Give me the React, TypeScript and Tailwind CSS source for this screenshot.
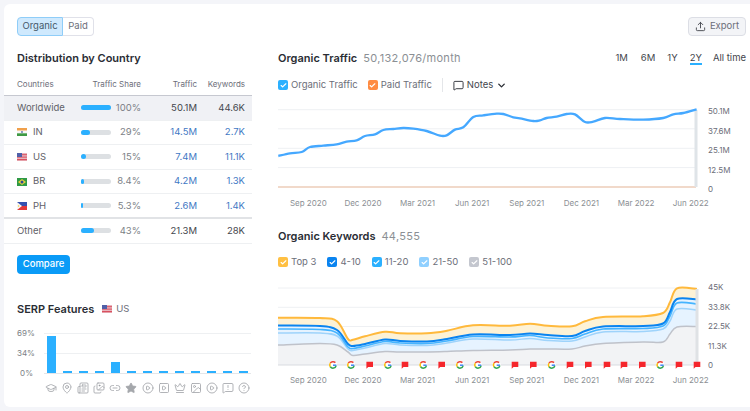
import { Check, ChevronDown, CircleHelp, CirclePlay, Crown, GraduationCap, Images, Image, Link2, MapPin, MessageSquare, MessageSquareWarning, Newspaper, SquarePlay, Star, Upload } from "lucide-react";

type Pt = [number, number];

const trafficLine: Pt[] = [
  [25, 174], [60, 166], [95, 162], [120, 147], [160, 143], [200, 139], [230, 131], [260, 127], [285, 114], [315, 109],
  [340, 96], [370, 93], [400, 90], [430, 92], [470, 99], [510, 113], [530, 112], [555, 95], [580, 88], [610, 57],
  [640, 52], [680, 47], [700, 48], [730, 58], [750, 61], [790, 69], [810, 67], [830, 60], [860, 56], [890, 48],
  [915, 49], [945, 72], [970, 71], [1005, 60], [1050, 63], [1120, 65], [1180, 60], [1210, 49], [1240, 45], [1280, 34],
];

// x, top 3, 4-10, 11-20, 21-50, 51-100
const keywordRows = [
  [278, 318.7, 326.5, 330, 334, 346],
  [320, 319, 327, 330.5, 334, 344.5],
  [337, 322.3, 331, 334, 337, 346],
  [348, 340, 345, 348, 350, 353],
  [353, 340.7, 347, 349.5, 351.5, 356.5],
  [365, 337.3, 345, 347, 349, 355],
  [385, 332.7, 340.5, 342.5, 344.5, 352.5],
  [400, 334.3, 342, 344, 346, 353],
  [427, 334.3, 342.5, 344.5, 346.5, 353],
  [447, 331.7, 340, 342, 344, 352.5],
  [473, 326.3, 335.5, 337.5, 340, 351.5],
  [510, 326.7, 336, 338, 341, 351],
  [530, 324.7, 334.5, 336.5, 339.5, 350],
  [548, 326.7, 336, 339, 341.5, 350],
  [572, 327.3, 337, 339.5, 342, 350],
  [585, 322.3, 332, 335, 338, 347],
  [603, 318, 327.5, 330, 333, 344.5],
  [643, 317.3, 327, 329.5, 332.5, 343],
  [663, 314, 324.5, 327, 330, 343],
  [670, 303.3, 313, 317, 322, 335],
  [677, 289.3, 300, 304, 310, 328],
  [697, 290, 300.5, 305, 311, 327.5],
];

function smooth(pts: Pt[]) {
  let d = `M${pts[0][0]} ${pts[0][1]}`;
  for (let i = 0; i < pts.length - 1; i++) {
    const p0 = pts[i - 1] || pts[i];
    const p1 = pts[i];
    const p2 = pts[i + 1];
    const p3 = pts[i + 2] || p2;
    const c1x = p1[0] + (p2[0] - p0[0]) / 6;
    const c1y = p1[1] + (p2[1] - p0[1]) / 6;
    const c2x = p2[0] - (p3[0] - p1[0]) / 6;
    const c2y = p2[1] - (p3[1] - p1[1]) / 6;
    d += `C${c1x} ${c1y} ${c2x} ${c2y} ${p2[0]} ${p2[1]}`;
  }
  return d;
}

const series = (i: number): Pt[] => keywordRows.map((r) => [r[0], r[i]]);
const area = (i: number) => `${smooth(series(i))}L697 366L278 366Z`;

function FlagIN() {
  return (
    <svg width="10" height="8" viewBox="0 0 10 8">
      <rect width="10" height="2.7" fill="#f0a04b" />
      <rect y="2.7" width="10" height="2.6" fill="#f7f7f7" />
      <rect y="5.3" width="10" height="2.7" fill="#3f9a45" />
      <circle cx="5" cy="4" r="0.9" fill="#5a6fa8" />
    </svg>
  );
}

function FlagUS() {
  return (
    <svg width="10" height="8" viewBox="0 0 10 8">
      <rect width="10" height="8" fill="#e8b4bc" />
      <rect y="1.2" width="10" height="1" fill="#d9505f" />
      <rect y="3.6" width="10" height="1" fill="#d9505f" />
      <rect y="6" width="10" height="1.2" fill="#d9505f" />
      <rect width="5" height="4" fill="#5060a8" />
    </svg>
  );
}

function FlagBR() {
  return (
    <svg width="10" height="8" viewBox="0 0 10 8">
      <rect width="10" height="8" fill="#2f9a45" />
      <path d="M5 1L9 4L5 7L1 4Z" fill="#e8d23a" />
      <circle cx="5" cy="4" r="1.5" fill="#2b4a94" />
    </svg>
  );
}

function FlagPH() {
  return (
    <svg width="10" height="8" viewBox="0 0 10 8">
      <rect width="10" height="4" fill="#3350b0" />
      <rect y="4" width="10" height="4" fill="#e23a3a" />
      <path d="M0 0L5 4L0 8Z" fill="#f7f7f7" />
      <circle cx="1.6" cy="4" r="0.8" fill="#eec93c" />
    </svg>
  );
}

const rows = [
  { name: "Worldwide", pct: "100%", w: 100, traffic: "50.1M", kw: "44.6K", dark: true, bg: "bg-[#f0f1f5]", border: "border-b border-[#eef0f2]" },
  { name: "IN", flag: <FlagIN />, pct: "29%", w: 29, traffic: "14.5M", kw: "2.7K", border: "border-b border-[#eef0f2]" },
  { name: "US", flag: <FlagUS />, pct: "15%", w: 15, traffic: "7.4M", kw: "11.1K", border: "border-b border-[#eef0f2]" },
  { name: "BR", flag: <FlagBR />, pct: "8.4%", w: 11, traffic: "4.2M", kw: "1.3K", border: "border-b border-[#eef0f2]" },
  { name: "PH", flag: <FlagPH />, pct: "5.3%", w: 6, traffic: "2.6M", kw: "1.4K", border: "border-b-2 border-[#e1e3e6]" },
  { name: "Other", pct: "43%", w: 43, traffic: "21.3M", kw: "28K", dark: true, border: "border-b border-[#eef0f2]" },
];

const serpIcons = [GraduationCap, MapPin, Newspaper, Images, Link2, Star, CirclePlay, SquarePlay, Crown, Image, CirclePlay, MessageSquareWarning, CircleHelp];
const serpBars = [37, 2, 2, 2, 11, 2, 2, 2, 2, 2, 2, 2, 2];

const months = ["Sep 2020", "Dec 2020", "Mar 2021", "Jun 2021", "Sep 2021", "Dec 2021", "Mar 2022", "Jun 2022"];

const markers: { x: number; g: boolean }[] = [
  { x: 333, g: true }, { x: 351, g: true }, { x: 369.7, g: false }, { x: 388, g: true }, { x: 405, g: false },
  { x: 423.3, g: true }, { x: 441.7, g: false }, { x: 460, g: true }, { x: 478, g: true }, { x: 496.7, g: true },
  { x: 515, g: false }, { x: 533.3, g: false }, { x: 551.7, g: true }, { x: 570, g: false }, { x: 588.3, g: false },
  { x: 607, g: false }, { x: 624, g: false }, { x: 642.3, g: false }, { x: 660.3, g: true }, { x: 679, g: false }, { x: 697, g: false },
];

function Box({ color, label, className }: { color: string; label: string; className: string }) {
  return (
    <div className={`flex items-center gap-[3px] ${className}`}>
      <span className={`flex h-[10px] w-[10px] items-center justify-center rounded-[2px] ${color}`}>
        <Check size={7} strokeWidth={4} color="#fff" />
      </span>
      <span>{label}</span>
    </div>
  );
}

function MonthAxis() {
  return (
    <div className="ml-[3px] grid w-[437px] grid-cols-8 justify-items-center text-[8px] leading-[12px] whitespace-nowrap text-[#8b8f94]">
      {months.map((m) => (
        <span key={m}>{m}</span>
      ))}
    </div>
  );
}

function YAxis({ labels }: { labels: string[] }) {
  return (
    <div className="flex h-[90px] flex-col justify-between text-[8px] leading-[12px] text-[#6c6e79]">
      {labels.map((l) => (
        <span key={l}>{l}</span>
      ))}
    </div>
  );
}

export default function App() {
  return (
    <div className="h-[411px] w-[750px] overflow-hidden bg-[#f4f5f9] pt-[4px] pb-[4px] pl-[4px] font-['Inter',sans-serif]">
      <div className="flex h-[403px] rounded-l-[6px] bg-white">
        {/* left column */}
        <div className="w-[248px] shrink-0 pt-[13px]">
          <div className="ml-[13px] flex h-[19px] w-[77px] text-[9.5px] text-[#6c6e79]">
            <div className="flex w-[46px] items-center justify-center rounded-l-[4px] border border-[#8fcdf8] bg-[#cfe9fd] text-[#45596b]">Organic</div>
            <div className="flex w-[31px] items-center justify-center rounded-r-[4px] border border-l-0 border-[#e0e1e9]">Paid</div>
          </div>

          <h2 className="mt-[14px] ml-[13px] text-[11px] leading-[16px] font-semibold text-[#2a2d34]">Distribution by Country</h2>

          <div className="mt-[12px] grid h-[17px] grid-cols-[124px_56px_48px] items-start pl-[13px] text-[8px] leading-[12px] text-[#6c6e79]">
            <span className="flex justify-between">
              <span>Countries</span>
              <span>Traffic Share</span>
            </span>
            <span className="text-right">Traffic</span>
            <span className="text-right">Keywords</span>
          </div>

          <div className="border-t border-[#c6c8d0]">
            {rows.map((r) => (
              <div key={r.name} className={`grid h-[24.6px] grid-cols-[64px_30px_30px_56px_48px] items-center pl-[13px] text-[9.5px] ${r.bg || ""} ${r.border}`}>
                <div className="flex items-center gap-[6px] text-[#5f6168]">
                  {r.flag}
                  <span>{r.name}</span>
                </div>
                <div className="h-[5px] w-[30px] rounded-full bg-[#dde0e3]">
                  <div className="h-[5px] rounded-full bg-[#2bb0ff]" style={{ width: `${r.w}%` }} />
                </div>
                <span className="text-right text-[#7c7f86]">{r.pct}</span>
                <span className={`text-right ${r.dark ? "text-[#44464d]" : "text-[#3f78c4]"}`}>{r.traffic}</span>
                <span className={`text-right ${r.dark ? "text-[#44464d]" : "text-[#3f78c4]"}`}>{r.kw}</span>
              </div>
            ))}
          </div>

          <button className="mt-[11px] ml-[13px] flex h-[19px] w-[53px] items-center justify-center rounded-[4px] bg-[#0a9bf7] text-[9.5px] font-medium text-white">Compare</button>

          <div className="mt-[27px] ml-[13px] flex items-center text-[11px] leading-[16px]">
            <h2 className="font-semibold text-[#2a2d34]">SERP Features</h2>
            <span className="ml-[8px]"><FlagUS /></span>
            <span className="ml-[4px] text-[9.5px] text-[#6c6e79]">US</span>
          </div>

          <div className="mt-[10px] flex pl-[13px]">
            <div className="flex h-[52px] w-[27px] flex-col justify-between text-right text-[8px] leading-[12px] text-[#7c7f86]">
              <span className="block w-[16px]">69%</span>
              <span className="block w-[16px]">34%</span>
              <span className="block w-[16px]">0%</span>
            </div>
            <div className="mt-[6px] flex h-[41px] w-[207px] items-end gap-[7px] border-b border-[#e4e6e9] bg-[linear-gradient(#eef0f2_1px,transparent_1px)] bg-[length:100%_20px] pl-[3px]">
              {serpBars.map((h, i) => (
                <div key={i} className="w-[9px] bg-[#2bb0ff]" style={{ height: h }} />
              ))}
            </div>
          </div>
          <div className="mt-[3px] ml-[41px] flex w-[212px] gap-[4.1px]">
            {serpIcons.map((Icon, i) => (
              <Icon key={i} size={12} strokeWidth={1.7} color="#a4a7ab" fill={Icon === Star ? "#a4a7ab" : "none"} />
            ))}
          </div>
        </div>

        {/* right column */}
        <div className="min-w-0 flex-1 pt-[13px] pl-[26px]">
          <div className="flex justify-end pr-[4px]">
            <button className="flex h-[19px] w-[58px] items-center justify-center gap-[4px] rounded-[4px] border border-[#dcdee5] bg-[#f3f4f7] text-[9.5px] text-[#6c6e79]">
              <Upload size={11} color="#44464d" />
              Export
            </button>
          </div>

          <div className="mt-[14px] flex h-[16px] items-center pr-[4px]">
            <h2 className="text-[11px] font-semibold text-[#2a2d34]">Organic Traffic</h2>
            <span className="ml-[6px] text-[11px] tracking-[0.3px] text-[#8b8f94]">50,132,076/month</span>
            <div className="ml-auto flex items-center gap-[12px] text-[9.5px] text-[#44464d]">
              <span className="mr-[1px]">1M</span>
              <span>6M</span>
              <span>1Y</span>
              <span className="border-b-2 border-[#2bb0ff] leading-[11px]">2Y</span>
              <span className="ml-[-1px]">All time</span>
            </div>
          </div>

          <div className="mt-[12px] flex h-[14px] items-center text-[9.5px] text-[#6c6e79]">
            <Box color="bg-[#2bb0ff]" label="Organic Traffic" className="" />
            <Box color="bg-[#ff8c43]" label="Paid Traffic" className="ml-[10px]" />
            <div className="ml-[10px] h-[14px] w-px bg-[#e4e6e9]" />
            <MessageSquare size={11} color="#2a2d34" strokeWidth={2} className="ml-[10px]" />
            <span className="ml-[3px] text-[#44464d]">Notes</span>
            <ChevronDown size={11} strokeWidth={3} color="#2a2d34" className="ml-[3px]" />
          </div>

          {/* traffic chart */}
          <div className="mt-[14px] flex items-start">
            <svg width="420" height="85" viewBox="278 108 420 85" className="shrink-0">
              {[111.7, 130.8, 150.3, 169.6].map((y) => (
                <line key={y} x1="278" x2="696" y1={y} y2={y} stroke="#eef0f3" />
              ))}
              <line x1="278" x2="696" y1="189" y2="189" stroke="#eccdb9" strokeWidth="1.5" />
              <rect x="694.5" y="112" width="3" height="77" fill="#dfe4e8" />
              <g transform="translate(270 100) scale(0.3333)">
                <path d={smooth(trafficLine)} fill="none" stroke="#45a8ff" strokeWidth="7" strokeLinejoin="round" />
              </g>
            </svg>
            <div className="-mt-[1px] ml-[10px]">
              <YAxis labels={["50.1M", "37.6M", "25.1M", "12.5M", "0"]} />
            </div>
          </div>
          <div className="mt-[2px]">
            <MonthAxis />
          </div>

          <div className="mt-[19px] flex h-[16px] items-center">
            <h2 className="text-[11px] font-semibold text-[#2a2d34]">Organic Keywords</h2>
            <span className="ml-[6px] text-[11px] tracking-[0.3px] text-[#8b8f94]">44,555</span>
          </div>

          <div className="mt-[11px] flex h-[14px] items-center gap-[11px] text-[9.5px] text-[#6c6e79]">
            <Box color="bg-[#ffc043]" label="Top 3" className="" />
            <Box color="bg-[#0a84f0]" label="4-10" className="" />
            <Box color="bg-[#2bb0ff]" label="11-20" className="" />
            <Box color="bg-[#90d0ff]" label="21-50" className="" />
            <Box color="bg-[#c4c7cf]" label="51-100" className="" />
          </div>

          {/* keywords chart */}
          <div className="relative mt-[17px] flex items-start">
            <svg width="427" height="87" viewBox="278 287 427 87" className="shrink-0">
              {[289, 308.3, 327.5, 347].map((y) => (
                <line key={y} x1="278" x2="697" y1={y} y2={y} stroke="#eef0f3" />
              ))}
              <path d={area(1)} fill="#fdf2d6" />
              <path d={area(2)} fill="#e6f3ff" />
              <path d={area(5)} fill="#f2f3f5" />
              <path d={smooth(series(4))} fill="none" stroke="#9ed3fb" strokeWidth="1.5" />
              <path d={smooth(series(3))} fill="none" stroke="#45b4ff" strokeWidth="1.7" />
              <path d={smooth(series(2))} fill="none" stroke="#0a84f0" strokeWidth="2" />
              <path d={smooth(series(5))} fill="none" stroke="#bfc2ca" strokeWidth="1.5" />
              <path d={smooth(series(1))} fill="none" stroke="#ffb93c" strokeWidth="2" />
              <line x1="278" x2="697" y1="366" y2="366" stroke="#d9dbe0" />
              <rect x="695.5" y="290" width="3" height="76" fill="#dfe2e5" />
              {markers.map((m) =>
                m.g ? (
                  <g key={m.x} transform={`translate(${m.x} 366)`} fill="none" strokeWidth="1.5">
                    <circle r="4" fill="#fff" stroke="none" />
                    <path d="M2.4 -2.4A3.3 3.3 0 0 0 -2.7 -1.8" stroke="#ea4335" />
                    <path d="M-2.7 -1.8A3.3 3.3 0 0 0 -2.7 1.8" stroke="#fbbc05" />
                    <path d="M-2.7 1.8A3.3 3.3 0 0 0 3.2 0.6" stroke="#34a853" />
                    <path d="M0 0.2H3.3" stroke="#4285f4" />
                  </g>
                ) : (
                  <g key={m.x} transform={`translate(${m.x} 366)`}>
                    <path d="M-3.3 -3.3H3.3V2H-1.5L-3.3 3.8Z" fill="#f5262c" />
                  </g>
                ),
              )}
            </svg>
            <div className="absolute top-[-5px] left-[430px] flex h-[90px] flex-col justify-between text-[8px] leading-[12px] text-[#6c6e79]">
              {["45K", "33.8K", "22.5K", "11.3K", "0"].map((l) => (
                <span key={l}>{l}</span>
              ))}
            </div>
          </div>
          <div className="mt-[1px]">
            <MonthAxis />
          </div>
        </div>
      </div>
    </div>
  );
}
